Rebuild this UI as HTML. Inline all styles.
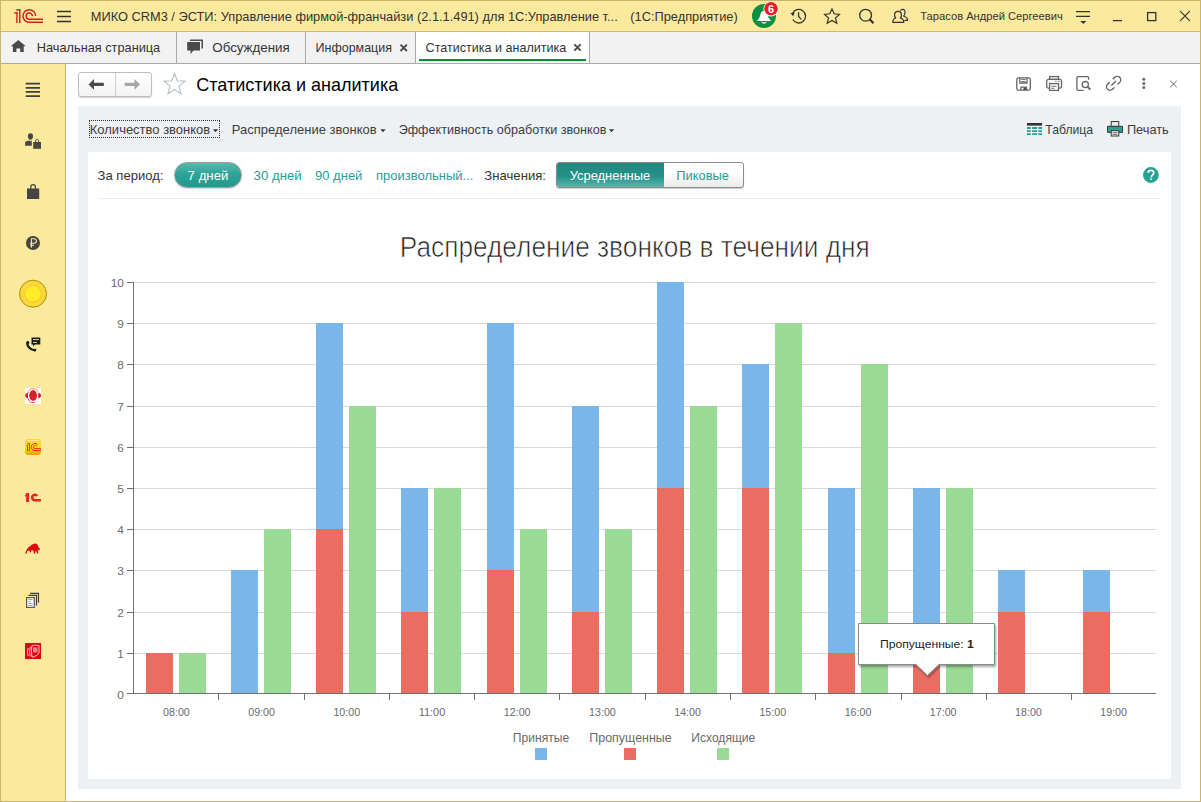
<!DOCTYPE html>
<html><head><meta charset="utf-8">
<style>
*{margin:0;padding:0;box-sizing:border-box}
html,body{width:1201px;height:802px;overflow:hidden;background:#fff;font-family:"Liberation Sans",sans-serif;color:#333}
.a{position:absolute;white-space:nowrap;line-height:1}
.b{position:absolute}
.tt{font-size:13px;color:#333}
.lnk{font-size:13px;color:#2A9D95}
svg.ov{position:absolute;left:0;top:0}
</style></head><body>
<!-- frame -->
<div class="b" style="left:0;top:0;width:1201px;height:802px;background:#C9B56B"></div>
<div class="b" style="left:1px;top:1px;width:1199px;height:800px;background:#fff"></div>
<div class="b" style="left:1px;top:1px;width:1199px;height:30px;background:#FBEA9E"></div>
<div class="b" style="left:1px;top:31px;width:1199px;height:1px;background:#CDBB70"></div>
<div class="b" style="left:1px;top:32px;width:1199px;height:31px;background:#F2F2F2"></div>
<div class="b" style="left:1px;top:63px;width:1199px;height:1px;background:#A9A9A9"></div>
<div class="b" style="left:1px;top:64px;width:64px;height:737px;background:#FBEA9E"></div>
<div class="b" style="left:65px;top:64px;width:1px;height:737px;background:#C9B56B"></div>
<div class="b" style="left:0;top:0;width:1px;height:802px;background:#C9B56B"></div>

<!-- tabs -->
<div class="b" style="left:176px;top:32px;width:1px;height:31px;background:#A9A9A9"></div>
<div class="b" style="left:305px;top:32px;width:1px;height:31px;background:#A9A9A9"></div>
<div class="b" style="left:415px;top:32px;width:1px;height:31px;background:#A9A9A9"></div>
<div class="b" style="left:416px;top:32px;width:173px;height:31px;background:#fff"></div>
<div class="b" style="left:589px;top:32px;width:1px;height:31px;background:#A9A9A9"></div>
<div class="b" style="left:419px;top:59px;width:167px;height:2px;background:#009133"></div>

<!-- title text -->

<!-- header -->
<div class="b" style="left:78px;top:72px;width:74px;height:25px;border:1px solid #BDBDBD;border-radius:3px;background:linear-gradient(#fff,#F3F3F3);box-shadow:0 1px 1px rgba(0,0,0,.18)"></div>
<div class="b" style="left:115px;top:73px;width:1px;height:23px;background:#CFCFCF"></div>

<!-- gray panel -->
<div class="b" style="left:78px;top:106px;width:1103px;height:683px;background:#EEF1F4"></div>
<div class="b" style="left:88px;top:152px;width:1083px;height:627px;background:#fff"></div>

<!-- toolbar -->
<div class="b" style="left:89px;top:120px;width:131px;height:18px;border:1px dotted #333"></div>

<!-- period row -->
<div class="b" style="left:174px;top:162px;width:68px;height:26px;border-radius:13px;background:linear-gradient(#55BAAE,#2DA497 45%,#22998C);border:1px solid #A89C9C;box-shadow:0 1px 1px rgba(0,0,0,.15)"></div>
<div class="b" style="left:556px;top:162px;width:188px;height:26px;border:1px solid #8C8C8C;border-radius:3px;background:linear-gradient(#fff 40%,#EAEAEA);box-shadow:0 1px 1px rgba(0,0,0,.2)"></div>
<div class="b" style="left:557px;top:163px;width:107px;height:24px;border-radius:2px 0 0 2px;background:linear-gradient(#1F877D 0%,#24928A 55%,#5DB3AA 100%)"></div>
<div class="b" style="left:98px;top:198px;width:1063px;height:1px;background:#E9EDF0"></div>

<svg class="ov" width="1201" height="802">
<line x1="134" y1="653.5" x2="1156" y2="653.5" stroke="#D9D9D9"/><line x1="134" y1="612.5" x2="1156" y2="612.5" stroke="#D9D9D9"/><line x1="134" y1="570.5" x2="1156" y2="570.5" stroke="#D9D9D9"/><line x1="134" y1="529.5" x2="1156" y2="529.5" stroke="#D9D9D9"/><line x1="134" y1="488.5" x2="1156" y2="488.5" stroke="#D9D9D9"/><line x1="134" y1="447.5" x2="1156" y2="447.5" stroke="#D9D9D9"/><line x1="134" y1="406.5" x2="1156" y2="406.5" stroke="#D9D9D9"/><line x1="134" y1="364.5" x2="1156" y2="364.5" stroke="#D9D9D9"/><line x1="134" y1="323.5" x2="1156" y2="323.5" stroke="#D9D9D9"/><line x1="134" y1="282.5" x2="1156" y2="282.5" stroke="#D9D9D9"/>
<rect x="146" y="653" width="27" height="40" fill="#EA6D61"/><rect x="179" y="653" width="27" height="40" fill="#99DA94"/><rect x="231" y="570" width="27" height="123" fill="#7BB6EA"/><rect x="264" y="529" width="27" height="164" fill="#99DA94"/><rect x="316" y="529" width="27" height="164" fill="#EA6D61"/><rect x="316" y="323" width="27" height="206" fill="#7BB6EA"/><rect x="349" y="406" width="27" height="287" fill="#99DA94"/><rect x="401" y="612" width="27" height="81" fill="#EA6D61"/><rect x="401" y="488" width="27" height="124" fill="#7BB6EA"/><rect x="434" y="488" width="27" height="205" fill="#99DA94"/><rect x="487" y="570" width="27" height="123" fill="#EA6D61"/><rect x="487" y="323" width="27" height="247" fill="#7BB6EA"/><rect x="520" y="529" width="27" height="164" fill="#99DA94"/><rect x="572" y="612" width="27" height="81" fill="#EA6D61"/><rect x="572" y="406" width="27" height="206" fill="#7BB6EA"/><rect x="605" y="529" width="27" height="164" fill="#99DA94"/><rect x="657" y="488" width="27" height="205" fill="#EA6D61"/><rect x="657" y="282" width="27" height="206" fill="#7BB6EA"/><rect x="690" y="406" width="27" height="287" fill="#99DA94"/><rect x="742" y="488" width="27" height="205" fill="#EA6D61"/><rect x="742" y="364" width="27" height="124" fill="#7BB6EA"/><rect x="775" y="323" width="27" height="370" fill="#99DA94"/><rect x="828" y="653" width="27" height="40" fill="#EA6D61"/><rect x="828" y="488" width="27" height="165" fill="#7BB6EA"/><rect x="861" y="364" width="27" height="329" fill="#99DA94"/><rect x="913" y="653" width="27" height="40" fill="#EA6D61"/><rect x="913" y="488" width="27" height="165" fill="#7BB6EA"/><rect x="946" y="488" width="27" height="205" fill="#99DA94"/><rect x="998" y="612" width="27" height="81" fill="#EA6D61"/><rect x="998" y="570" width="27" height="42" fill="#7BB6EA"/><rect x="1083" y="612" width="27" height="81" fill="#EA6D61"/><rect x="1083" y="570" width="27" height="42" fill="#7BB6EA"/>
<line x1="133.5" y1="282" x2="133.5" y2="694" stroke="#717171"/>
<line x1="127" y1="693.5" x2="1156" y2="693.5" stroke="#717171"/>
<line x1="127" y1="693.5" x2="133" y2="693.5" stroke="#717171"/><line x1="127" y1="653.5" x2="133" y2="653.5" stroke="#717171"/><line x1="127" y1="612.5" x2="133" y2="612.5" stroke="#717171"/><line x1="127" y1="570.5" x2="133" y2="570.5" stroke="#717171"/><line x1="127" y1="529.5" x2="133" y2="529.5" stroke="#717171"/><line x1="127" y1="488.5" x2="133" y2="488.5" stroke="#717171"/><line x1="127" y1="447.5" x2="133" y2="447.5" stroke="#717171"/><line x1="127" y1="406.5" x2="133" y2="406.5" stroke="#717171"/><line x1="127" y1="364.5" x2="133" y2="364.5" stroke="#717171"/><line x1="127" y1="323.5" x2="133" y2="323.5" stroke="#717171"/><line x1="127" y1="282.5" x2="133" y2="282.5" stroke="#717171"/><line x1="218.5" y1="693" x2="218.5" y2="700" stroke="#717171"/><line x1="304.5" y1="693" x2="304.5" y2="700" stroke="#717171"/><line x1="389.5" y1="693" x2="389.5" y2="700" stroke="#717171"/><line x1="474.5" y1="693" x2="474.5" y2="700" stroke="#717171"/><line x1="559.5" y1="693" x2="559.5" y2="700" stroke="#717171"/><line x1="645.5" y1="693" x2="645.5" y2="700" stroke="#717171"/><line x1="730.5" y1="693" x2="730.5" y2="700" stroke="#717171"/><line x1="815.5" y1="693" x2="815.5" y2="700" stroke="#717171"/><line x1="901.5" y1="693" x2="901.5" y2="700" stroke="#717171"/><line x1="986.5" y1="693" x2="986.5" y2="700" stroke="#717171"/><line x1="1071.5" y1="693" x2="1071.5" y2="700" stroke="#717171"/>
<rect x="535" y="748" width="12" height="12" fill="#7BB6EA"/>
<rect x="624" y="748" width="12" height="12" fill="#EA6D61"/>
<rect x="717" y="748" width="12" height="12" fill="#99DA94"/>
</svg>

<!-- tooltip -->
<svg class="ov" width="1201" height="802">
 <defs><filter id="sh" x="-10%" y="-10%" width="130%" height="140%"><feGaussianBlur in="SourceAlpha" stdDeviation="1.2"/><feOffset dx="1" dy="2"/><feComponentTransfer><feFuncA type="linear" slope="0.35"/></feComponentTransfer><feMerge><feMergeNode/><feMergeNode in="SourceGraphic"/></feMerge></filter></defs>
 <path d="M858.5 623.5 H994.5 V664.5 H939 L927.5 675.5 L916 664.5 H858.5 Z" fill="#fff" stroke="#8A8A8A" stroke-width="1" filter="url(#sh)"/>
</svg>

<!-- icons overlay -->
<svg class="ov" width="1201" height="802">
 <!-- 1C logo -->
 <g fill="#DC1F1A">
  <rect x="16.2" y="9.2" width="4.3" height="1.5"/><rect x="19" y="9.2" width="1.5" height="13.8"/>
  <rect x="16.2" y="12.2" width="1.4" height="10.8"/><rect x="14.1" y="12.2" width="3.5" height="1.4"/>
 </g>
 <g fill="none" stroke="#DC1F1A" stroke-width="1.5">
  <path d="M35.6 16 A6.3 6.3 0 1 0 29.3 22.3 H43"/>
  <path d="M32.4 16.2 A3.1 3.1 0 1 0 29.3 19.3 H43"/>
 </g>
 <!-- title hamburger -->
 <path d="M57 11.5 H71 M57 16.5 H71 M57 21.5 H71" stroke="#333" stroke-width="1.3"/>
 <!-- bell -->
 <circle cx="764" cy="15.9" r="12" fill="#0A9040"/>
 <path d="M757 21 L771 21 L768.5 17.5 L767 12.5 Q764 9 761 12.5 L759.5 17.5 Z" fill="#fff"/>
 <path d="M761 22.3 H767 Q764 25 761 22.3 Z" fill="#fff"/>
 <circle cx="771" cy="8.8" r="7.6" fill="#fff"/>
 <circle cx="771" cy="8.8" r="6.8" fill="#EE1C25"/>
 <text x="771" y="12.6" text-anchor="middle" font-size="11" font-weight="bold" fill="#fff" font-family="Liberation Sans">6</text>
 <!-- history -->
 <g fill="none" stroke="#333" stroke-width="1.3">
  <path d="M792.5 13.5 A6.8 6.8 0 1 1 792.8 19.5"/>
  <path d="M798.6 12.3 V16.5 L801.3 19.4"/>
 </g>
 <path d="M790.4 13.2 L794.6 12.6 L793.2 16.2 Z" fill="#333"/>
 <!-- star -->
 <path d="M832 9 L834.2 13.8 L839.5 14.4 L835.5 17.9 L836.8 23.2 L832 20.4 L827.2 23.2 L828.5 17.9 L824.5 14.4 L829.8 13.8 Z" fill="none" stroke="#333" stroke-width="1.2" stroke-linejoin="miter"/>
 <!-- search -->
 <circle cx="865.6" cy="15.2" r="5.9" fill="none" stroke="#333" stroke-width="1.3"/>
 <path d="M869.8 19.5 L873.5 23.2" stroke="#333" stroke-width="2.2"/>
 <!-- users -->
 <g fill="none" stroke="#333" stroke-width="1.2" stroke-linejoin="round">
  <path d="M892.8 22.4 H903.8 C904 19.5 902 18.6 900.3 18 C901.5 16.8 901.6 15.5 901.4 14 C901.1 12.2 899.8 11.4 898 11.4 C896.2 11.4 894.9 12.2 894.6 14 C894.4 15.5 894.5 16.8 895.7 18 C894 18.6 892.6 19.5 892.8 22.4 Z"/>
  <path d="M900.3 10.6 C900.8 9.7 901.6 9.3 902.6 9.3 C904.4 9.3 905.1 10.7 905 12.5 C904.9 14 904.7 15.2 903.6 16 C905.2 16.6 907.6 17.5 907.6 20.3 H904.5"/>
 </g>
 <!-- filter -->
 <path d="M1076 11.6 H1090 M1076 16.4 H1090" stroke="#333" stroke-width="1.3"/>
 <path d="M1080.3 21 H1086.3 L1083.3 24 Z" fill="#333"/>
 <!-- window controls -->
 <path d="M1113 20.6 H1122" stroke="#333" stroke-width="1.3"/>
 <rect x="1147.6" y="12.6" width="8.2" height="8" fill="none" stroke="#333" stroke-width="1.3"/>
 <path d="M1180.2 11.2 L1189.8 20.8 M1189.8 11.2 L1180.2 20.8" stroke="#333" stroke-width="1.2"/>

 <!-- tab icons -->
 <path d="M18.3 40 L25.8 46.3 H23.7 V52 H20.2 V48.6 H16.4 V52 H12.9 V46.3 H10.8 Z" fill="#4A4A4A"/>
 <path d="M190 39.5 H203 V48.5 H201.5 V41 H190 Z" fill="#4A4A4A"/>
 <path d="M187.2 42 H200 V50.5 H193.5 L190.5 54 V50.5 H187.2 Z" fill="#4A4A4A"/>
 <path d="M400.5 44.6 L406.9 51 M406.9 44.6 L400.5 51" stroke="#4A4A4A" stroke-width="1.9"/>
 <path d="M574.3 44.3 L580.7 50.7 M580.7 44.3 L574.3 50.7" stroke="#4A4A4A" stroke-width="1.9"/>

 <!-- sidebar -->
 <path d="M25.7 83.6 H40 M25.7 87.8 H40 M25.7 91.9 H40 M25.7 96.1 H40" stroke="#3F3F3F" stroke-width="1.7"/>
 <!-- person+bag -->
 <g fill="#464646">
  <path d="M30.4 133.2 C32.2 133.2 33 134.3 33 136 C33 138 32.5 139.7 30.4 139.7 C28.3 139.7 27.9 138 27.9 136 C27.9 134.3 28.6 133.2 30.4 133.2 Z"/>
  <path d="M25.1 142.6 C25.5 141.2 28 140.5 29 140.4 L30.5 141.2 L31.8 140.6 V145.7 H25.1 Z"/>
  <rect x="33.2" y="142" width="7.8" height="6.8"/>
 </g>
 <path d="M35.6 142.2 V140.6 A1.6 1.6 0 0 1 38.6 140.6 V142.2" fill="none" stroke="#464646" stroke-width="1"/>
 <!-- bag -->
 <path d="M27 188.5 H39.2 V199 H27 Z" fill="#444"/>
 <path d="M30.8 191 V187 A2.3 2.3 0 0 1 35.4 187 V191" fill="none" stroke="#444" stroke-width="1.3"/>
 <!-- ruble -->
 <circle cx="33" cy="243" r="7" fill="#444"/>
 <path d="M31.4 247.8 V238.8 H34.2 A2.2 2.2 0 0 1 34.2 243.2 H30 M30 245.3 H34" fill="none" stroke="#FBEA9E" stroke-width="1.1"/>
 <!-- yellow circle -->
 <circle cx="33" cy="293.7" r="13.5" fill="#FDD63B" stroke="#A99500" stroke-width="1"/>
 <circle cx="33" cy="293.7" r="8.3" fill="#FFEB28" stroke="#E6C62E" stroke-width="0.7"/>
 <!-- phone chat -->
 <path d="M31.5 337.4 H40.3 V344.6 H34.8 L33.3 346.6 L33 344.6 H31.5 Z" fill="#1A1A1A"/>
 <path d="M33 339.6 H39 M33 342.4 H37" stroke="#FBEA9E" stroke-width="0.9"/>
 <path d="M27.6 342.2 Q26.6 344.6 28.9 347.3 Q31.6 350.4 34.6 350.2" fill="none" stroke="#1A1A1A" stroke-width="2.3" stroke-linecap="round"/>
 <path d="M26.2 342.4 L28.6 341 L29.6 343.2 L27.6 344.6 Z M33.6 350.8 L34.6 348.4 L36.6 349.6 L35.2 351.8 Z" fill="#1A1A1A"/>
 <!-- headset -->
 <rect x="25" y="388" width="16" height="16" fill="#fff"/>
 <ellipse cx="33.1" cy="395.4" rx="3.9" ry="5.3" fill="#D81F28"/>
 <path d="M28.2 393 C28.4 390.2 30.5 388.7 33.1 388.7 C35.7 388.7 37.8 390.2 38 393" fill="none" stroke="#D81F28" stroke-width="0.7" stroke-dasharray="1 0.4"/>
 <path d="M28 392.8 C26.3 393 25.2 394.2 25.2 395.6 C25.2 397 26.3 398.3 28 398.5 Z" fill="#D81F28"/>
 <path d="M38.2 392.8 C39.9 393 41 394.2 41 395.6 C41 397 39.9 398.3 38.2 398.5 Z" fill="#D81F28"/>
 <path d="M28.3 398.4 C28.6 400.8 29.8 402.4 31.6 402.5 H34.8" fill="none" stroke="#D81F28" stroke-width="0.8"/>
 <!-- orange 1C -->
 <defs><linearGradient id="og" x1="0" y1="0" x2="0" y2="1"><stop offset="0" stop-color="#FFD23A"/><stop offset="0.5" stop-color="#FFE21A"/><stop offset="1" stop-color="#F59A12"/></linearGradient></defs>
 <path d="M27 439 H39 L41 441 V453 L39 455 H27 L25 453 V441 Z" fill="url(#og)"/>
 <path d="M27 440.6 H39" stroke="#FFF3B0" stroke-width="0.8"/>
 <g fill="none" stroke="#E8201E" stroke-width="0.95">
  <path d="M26.3 445 H27.5 V451 M27.5 443.4 H29.4 V451"/>
  <path d="M37.6 444.7 A3.6 3.6 0 1 0 35 450.6 H41"/>
  <path d="M36.5 446.2 A1.6 1.6 0 1 0 35.2 448.6 H41"/>
 </g>
 <!-- 1C plain -->
 <g fill="#E82420">
  <rect x="26.1" y="493" width="3" height="9"/>
  <path d="M25 494.8 L26.3 494.2 V496.6 H25 Z"/>
 </g>
 <path d="M37.15 495.9 A2.75 2.75 0 1 0 34.9 500.25 H40.9" fill="none" stroke="#E82420" stroke-width="2.6"/>
 
 <!-- bull -->
 <path d="M25.3 553.3 C25.6 551.5 26.6 549.8 27.4 548.4 C28.8 546.6 31.2 545.3 33.2 544 C34.2 543.3 35.6 543.2 36.6 543.8 C37.6 544.6 38.2 545.8 38.4 547.2 C39.4 547.8 40 548.6 39.8 549.8 C39.2 550.6 38.4 550.3 37.6 550 L38.3 553.5 L37.4 553.8 L35.7 550.8 L34.9 553.8 L33.9 553.8 L33.4 550.4 L31.2 550.2 L31 552.6 L30.2 552.6 L29.4 550.4 L27.4 551 L26.2 554 Z" fill="#DC0A14"/>
 <!-- docs -->
 <g fill="none" stroke="#3F3F3F" stroke-width="1.2">
  <path d="M30.2 593.3 H38.5 V602.6"/><path d="M28.3 595.4 H36.5 V605.6"/>
 </g>
 <rect x="26.6" y="597.6" width="7.7" height="9.8" fill="#fff" stroke="#555A60" stroke-width="1.2"/>
 <path d="M28.2 599.6 H32.6 M28.2 601.6 H30.8 M28.2 603.5 H32.6 M28.2 605.5 H32.6" stroke="#888" stroke-width="0.75"/>
 <!-- red square -->
 <rect x="25" y="643" width="16" height="16" fill="#DA0A14"/>
 <g fill="none" stroke="#F8D8D8" stroke-width="0.9">
  <path d="M28.2 648 C27.2 650 27.2 654 28.2 656"/>
  <path d="M30.4 647 C29.4 650 29.4 654 30.4 656.5"/>
  <path d="M31.8 646 C33.5 645 36.5 645 39 645.6 V653 C38 655 35 656.5 32 657.2 C31.4 654 31.4 649 31.8 646 Z"/>
 </g>
 <rect x="33" y="647.5" width="4.5" height="5" fill="#F0A0A0" opacity="0.8"/>

 <!-- header nav -->
 <path d="M88.5 84.4 L94 79 V82.8 H103.8 V86 H94 V89.8 Z" fill="#4A4A4A"/>
 <path d="M140 84.4 L134.5 79 V82.8 H124.7 V86 H134.5 V89.8 Z" fill="#A6A6A6"/>
 <path d="M174.5 73.5 L177.2 80.8 L185 81.2 L179 86.2 L181 93.8 L174.5 89.6 L168 93.8 L170 86.2 L164 81.2 L171.8 80.8 Z" fill="none" stroke="#B4BCC4" stroke-width="1.1" stroke-linejoin="miter"/>

 <!-- header right icons -->
 <g fill="none" stroke="#666" stroke-width="1.3">
  <rect x="1016.8" y="77.8" width="13.5" height="12.3" rx="1.6"/>
  <path d="M1019.8 77.8 V83 H1027 V77.8"/>
  <path d="M1020.9 90 V87.2 H1026.5 V90"/>
 </g>
 <path d="M1021.2 79.5 H1025.6 M1021.2 81.5 H1025.6" stroke="#666" stroke-width="0.9"/>
 <rect x="1023.4" y="87.5" width="3" height="2.8" fill="#555"/>
 <g fill="none" stroke="#666" stroke-width="1.3">
  <rect x="1049.6" y="76.6" width="8.9" height="2.8"/>
  <path d="M1049.2 88.1 H1048.4 A1.7 1.7 0 0 1 1046.7 86.4 V81.1 A1.7 1.7 0 0 1 1048.4 79.4 H1059.8 A1.7 1.7 0 0 1 1061.5 81.1 V86.4 A1.7 1.7 0 0 1 1059.8 88.1 H1058.8"/>
  <rect x="1049.6" y="83.6" width="8.9" height="6.8" fill="#fff"/>
 </g>
 <path d="M1051.3 86.3 H1056.6 M1051.3 88.3 H1054.5 M1055.2 81.3 H1056.6 M1058 81.3 H1059.6" stroke="#666" stroke-width="0.9"/>
 <g fill="none" stroke="#666" stroke-width="1.3">
  <path d="M1083.6 90.3 H1078.2 A1.3 1.3 0 0 1 1076.9 89 V78 A1.3 1.3 0 0 1 1078.2 76.7 H1087.3 A1.3 1.3 0 0 1 1088.6 78 V79.8"/>
  <circle cx="1085.3" cy="84.6" r="3.1"/>
 </g>
 <path d="M1087.6 86.9 L1090.3 89.5" stroke="#666" stroke-width="2"/>
 <g fill="none" stroke="#5E5E5E" stroke-width="1.3" transform="translate(1113.65 83.3) rotate(-43.6)">
  <path d="M-2.2 -3.5 H-5 A3.5 3.5 0 0 0 -5 3.5 H-2.2"/>
  <path d="M2.2 3.5 H5 A3.5 3.5 0 0 0 5 -3.5 H2.2"/>
  <path d="M-3.2 0 H3.2"/>
 </g>
 <circle cx="1143.8" cy="79.3" r="1.5" fill="#6B6B6B"/>
 <circle cx="1143.8" cy="83.4" r="1.5" fill="#6B6B6B"/>
 <circle cx="1143.8" cy="87.5" r="1.5" fill="#6B6B6B"/>
 <path d="M1170.2 80.8 L1176.8 87.2 M1176.8 80.8 L1170.2 87.2" stroke="#6B6B6B" stroke-width="1"/>

 <!-- toolbar arrows -->
 <path d="M212.8 129.3 H218.2 L215.5 132.3 Z" fill="#3A3A3A"/>
 <path d="M380.3 129.3 H385.7 L383 132.3 Z" fill="#3A3A3A"/>
 <path d="M608.8 129.3 H614.2 L611.5 132.3 Z" fill="#3A3A3A"/>
 <!-- table icon -->
 <rect x="1027" y="123" width="15.1" height="2.6" fill="#333"/>
 <g stroke="#2E9E92" stroke-width="1.8">
  <path d="M1027 128 H1030.8 M1032.1 128 H1037 M1038.3 128 H1042.1"/>
  <path d="M1027 131.1 H1030.8 M1032.1 131.1 H1037 M1038.3 131.1 H1042.1"/>
  <path d="M1027 134.1 H1030.8 M1032.1 134.1 H1037 M1038.3 134.1 H1042.1"/>
 </g>
 <!-- printer toolbar -->
 <rect x="1111.2" y="121.5" width="7.6" height="5" fill="#E8E8E8" stroke="#3A3A3A" stroke-width="1"/>
 <path d="M1107.5 126.3 H1122.5 V132.4 H1107.5 Z" fill="#2E9E92" stroke="#3A3A3A" stroke-width="1"/>
 <rect x="1111.2" y="130.7" width="7.6" height="5.3" fill="#EDEDED" stroke="#3A3A3A" stroke-width="1"/>
 <path d="M1112.6 132.7 H1117.4 M1112.6 134.4 H1117.4" stroke="#555" stroke-width="0.8"/>
 <!-- help -->
 <circle cx="1150.9" cy="175" r="7.9" fill="#26A191"/>
 <path d="M1148 172.8 C1148.2 170.8 1149.6 170.4 1151 170.4 C1152.6 170.4 1153.8 171.4 1153.8 172.9 C1153.8 174.8 1151.2 175 1151.2 177.4" fill="none" stroke="#fff" stroke-width="1.7"/>
 <rect x="1150.2" y="178.4" width="1.9" height="1.6" fill="#fff"/>
</svg>
<svg class="ov" width="1201" height="802" font-family="Liberation Sans">
<text x="90.8" y="21" font-size="13.5" fill="#333" textLength="526.9" lengthAdjust="spacingAndGlyphs" >МИКО CRM3 / ЭСТИ: Управление фирмой-франчайзи (2.1.1.491) для 1С:Управление т...</text>
<text x="630.3" y="21" font-size="13.5" fill="#333" textLength="107.4" lengthAdjust="spacingAndGlyphs" >(1С:Предприятие)</text>
<text x="920.3" y="20" font-size="11.6" fill="#333" textLength="142.4" lengthAdjust="spacingAndGlyphs" >Тарасов Андрей Сергеевич</text>
<text x="36.8" y="52" font-size="13.5" fill="#333" textLength="123.4" lengthAdjust="spacingAndGlyphs" >Начальная страница</text>
<text x="212.3" y="52" font-size="13.5" fill="#333" textLength="77.4" lengthAdjust="spacingAndGlyphs" >Обсуждения</text>
<text x="315.6" y="52" font-size="13.5" fill="#333" textLength="76.4" lengthAdjust="spacingAndGlyphs" >Информация</text>
<text x="425.6" y="52" font-size="13.5" fill="#333" textLength="140.7" lengthAdjust="spacingAndGlyphs" >Статистика и аналитика</text>
<text x="196.3" y="91" font-size="19" fill="#000" textLength="201.9" lengthAdjust="spacingAndGlyphs" >Статистика и аналитика</text>
<text x="89.8" y="134" font-size="13.5" fill="#3C3C3C" textLength="120.4" lengthAdjust="spacingAndGlyphs" >Количество звонков</text>
<text x="231.8" y="134" font-size="13.5" fill="#3C3C3C" textLength="144.9" lengthAdjust="spacingAndGlyphs" >Распределение звонков</text>
<text x="398.7" y="134" font-size="13.5" fill="#3C3C3C" textLength="207.7" lengthAdjust="spacingAndGlyphs" >Эффективность обработки звонков</text>
<text x="1045.3" y="133.5" font-size="12.8" fill="#3C3C3C" textLength="47.8" lengthAdjust="spacingAndGlyphs" >Таблица</text>
<text x="1126.9" y="133.5" font-size="12.8" fill="#3C3C3C" textLength="41.8" lengthAdjust="spacingAndGlyphs" >Печать</text>
<text x="97.6" y="180" font-size="13.5" fill="#333" textLength="65.8" lengthAdjust="spacingAndGlyphs" >За период:</text>
<text x="187.6" y="180" font-size="13.5" fill="#fff" textLength="40.8" lengthAdjust="spacingAndGlyphs" >7 дней</text>
<text x="253.6" y="180" font-size="13.5" fill="#2A9D94" textLength="48.1" lengthAdjust="spacingAndGlyphs" >30 дней</text>
<text x="315.0" y="180" font-size="13.5" fill="#2A9D94" textLength="47.4" lengthAdjust="spacingAndGlyphs" >90 дней</text>
<text x="376.0" y="180" font-size="13.5" fill="#2A9D94" textLength="97.4" lengthAdjust="spacingAndGlyphs" >произвольный...</text>
<text x="484.3" y="180" font-size="13.5" fill="#333" textLength="61.7" lengthAdjust="spacingAndGlyphs" >Значения:</text>
<text x="569.7" y="180" font-size="13.5" fill="#fff" textLength="80.4" lengthAdjust="spacingAndGlyphs" >Усредненные</text>
<text x="676.3" y="180" font-size="13.5" fill="#2A9D94" textLength="52.7" lengthAdjust="spacingAndGlyphs" >Пиковые</text>
<text x="399.8" y="257" font-size="29.5" fill="#1E1E1E" textLength="469.9" lengthAdjust="spacingAndGlyphs" stroke="#fff" stroke-width="0.7">Распределение звонков в течении дня</text>
<text x="123.8" y="699" font-size="11.8" fill="#6A6A6A" text-anchor="end">0</text>
<text x="123.8" y="658" font-size="11.8" fill="#6A6A6A" text-anchor="end">1</text>
<text x="123.8" y="617" font-size="11.8" fill="#6A6A6A" text-anchor="end">2</text>
<text x="123.8" y="575" font-size="11.8" fill="#6A6A6A" text-anchor="end">3</text>
<text x="123.8" y="534" font-size="11.8" fill="#6A6A6A" text-anchor="end">4</text>
<text x="123.8" y="493" font-size="11.8" fill="#6A6A6A" text-anchor="end">5</text>
<text x="123.8" y="452" font-size="11.8" fill="#6A6A6A" text-anchor="end">6</text>
<text x="123.8" y="411" font-size="11.8" fill="#6A6A6A" text-anchor="end">7</text>
<text x="123.8" y="369" font-size="11.8" fill="#6A6A6A" text-anchor="end">8</text>
<text x="123.8" y="328" font-size="11.8" fill="#6A6A6A" text-anchor="end">9</text>
<text x="123.8" y="287" font-size="11.8" fill="#6A6A6A" text-anchor="end">10</text>
<text x="176.4" y="716" font-size="11.6" fill="#6A6A6A" text-anchor="middle" textLength="26.7" lengthAdjust="spacingAndGlyphs" >08:00</text>
<text x="261.6" y="716" font-size="11.6" fill="#6A6A6A" text-anchor="middle" textLength="26.7" lengthAdjust="spacingAndGlyphs" >09:00</text>
<text x="346.8" y="716" font-size="11.6" fill="#6A6A6A" text-anchor="middle" textLength="26.7" lengthAdjust="spacingAndGlyphs" >10:00</text>
<text x="432.0" y="716" font-size="11.6" fill="#6A6A6A" text-anchor="middle" textLength="26.7" lengthAdjust="spacingAndGlyphs" >11:00</text>
<text x="517.2" y="716" font-size="11.6" fill="#6A6A6A" text-anchor="middle" textLength="26.7" lengthAdjust="spacingAndGlyphs" >12:00</text>
<text x="602.4" y="716" font-size="11.6" fill="#6A6A6A" text-anchor="middle" textLength="26.7" lengthAdjust="spacingAndGlyphs" >13:00</text>
<text x="687.6" y="716" font-size="11.6" fill="#6A6A6A" text-anchor="middle" textLength="26.7" lengthAdjust="spacingAndGlyphs" >14:00</text>
<text x="772.8" y="716" font-size="11.6" fill="#6A6A6A" text-anchor="middle" textLength="26.7" lengthAdjust="spacingAndGlyphs" >15:00</text>
<text x="858.0" y="716" font-size="11.6" fill="#6A6A6A" text-anchor="middle" textLength="26.7" lengthAdjust="spacingAndGlyphs" >16:00</text>
<text x="943.2" y="716" font-size="11.6" fill="#6A6A6A" text-anchor="middle" textLength="26.7" lengthAdjust="spacingAndGlyphs" >17:00</text>
<text x="1028.4" y="716" font-size="11.6" fill="#6A6A6A" text-anchor="middle" textLength="26.7" lengthAdjust="spacingAndGlyphs" >18:00</text>
<text x="1113.6" y="716" font-size="11.6" fill="#6A6A6A" text-anchor="middle" textLength="26.7" lengthAdjust="spacingAndGlyphs" >19:00</text>
<text x="512.8" y="742" font-size="12.5" fill="#6A6A6A" textLength="56.4" lengthAdjust="spacingAndGlyphs" >Принятые</text>
<text x="589.3" y="742" font-size="12.5" fill="#6A6A6A" textLength="82.4" lengthAdjust="spacingAndGlyphs" >Пропущенные</text>
<text x="691.3" y="742" font-size="12.5" fill="#6A6A6A" textLength="64.0" lengthAdjust="spacingAndGlyphs" >Исходящие</text>
<text x="879.9" y="648" font-size="11.8" fill="#222" textLength="94.0" lengthAdjust="spacingAndGlyphs" >Пропущенные: <tspan font-weight="bold">1</tspan></text>
</svg>
</body></html>
